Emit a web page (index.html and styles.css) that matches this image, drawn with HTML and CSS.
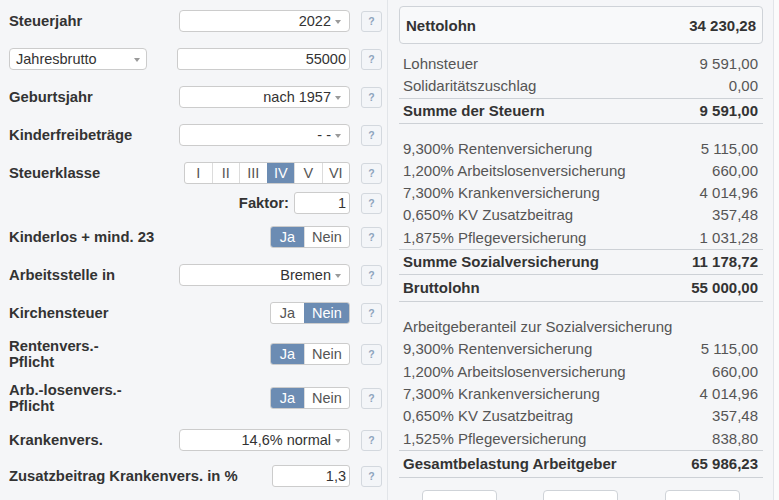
FILE: index.html
```html
<!DOCTYPE html>
<html lang="de">
<head>
    <meta charset="UTF-8">
    <meta name="viewport" content="width=device-width, initial-scale=1.0">
    <title>Brutto Netto Rechner</title>
    <link rel="stylesheet" href="styles.css">
</head>
<body>
    <div class="page">
        <div class="form-col">
            <div class="row">
                <div class="label">Steuerjahr</div>
                <div class="select">2022<span class="caret"></span></div>
                <span class="help">?</span>
            </div>
            <div class="row">
                <div class="label"><div class="select select-left">Jahresbrutto<span class="caret"></span></div></div>
                <div class="input input-wide">55000</div>
                <span class="help">?</span>
            </div>
            <div class="row">
                <div class="label">Geburtsjahr</div>
                <div class="select">nach 1957<span class="caret"></span></div>
                <span class="help">?</span>
            </div>
            <div class="row">
                <div class="label">Kinderfreibeträge</div>
                <div class="select">- -<span class="caret"></span></div>
                <span class="help">?</span>
            </div>
            <div class="row row-close">
                <div class="label">Steuerklasse</div>
                <div class="seg seg-classes">
                    <span>I</span><span>II</span><span>III</span><span class="active">IV</span><span>V</span><span>VI</span>
                </div>
                <span class="help">?</span>
            </div>
            <div class="row row-faktor">
                <div class="label label-right">Faktor:</div>
                <div class="input input-faktor">1</div>
                <span class="help">?</span>
            </div>
            <div class="row">
                <div class="label">Kinderlos + mind. 23</div>
                <div class="seg"><span class="yes active">Ja</span><span class="no">Nein</span></div>
                <span class="help">?</span>
            </div>
            <div class="row">
                <div class="label">Arbeitsstelle in</div>
                <div class="select">Bremen<span class="caret"></span></div>
                <span class="help">?</span>
            </div>
            <div class="row row-before-tall">
                <div class="label">Kirchensteuer</div>
                <div class="seg"><span class="yes">Ja</span><span class="no active">Nein</span></div>
                <span class="help">?</span>
            </div>
            <div class="row row-tall">
                <div class="label">Rentenvers.-<br>Pflicht</div>
                <div class="seg"><span class="yes active">Ja</span><span class="no">Nein</span></div>
                <span class="help">?</span>
            </div>
            <div class="row row-tall row-after-tall">
                <div class="label">Arb.-losenvers.-<br>Pflicht</div>
                <div class="seg"><span class="yes active">Ja</span><span class="no">Nein</span></div>
                <span class="help">?</span>
            </div>
            <div class="row row-kv">
                <div class="label">Krankenvers.</div>
                <div class="select">14,6% normal<span class="caret"></span></div>
                <span class="help">?</span>
            </div>
            <div class="row">
                <div class="label">Zusatzbeitrag Krankenvers. in %</div>
                <div class="input input-small">1,3</div>
                <span class="help">?</span>
            </div>
        </div>

        <div class="result-col">
            <div class="net-box"><span>Nettolohn</span><span>34 230,28</span></div>

            <div class="group group-first">
                <div class="line"><span>Lohnsteuer</span><span>9 591,00</span></div>
                <div class="line"><span>Solidaritätszuschlag</span><span>0,00</span></div>
                <div class="line sum"><span>Summe der Steuern</span><span>9 591,00</span></div>
            </div>

            <div class="group">
                <div class="line"><span>9,300% Rentenversicherung</span><span>5 115,00</span></div>
                <div class="line"><span>1,200% Arbeitslosenversicherung</span><span>660,00</span></div>
                <div class="line"><span>7,300% Krankenversicherung</span><span>4 014,96</span></div>
                <div class="line"><span>0,650% KV Zusatzbeitrag</span><span>357,48</span></div>
                <div class="line"><span>1,875% Pflegeversicherung</span><span>1 031,28</span></div>
                <div class="line sum"><span>Summe Sozialversicherung</span><span>11 178,72</span></div>
                <div class="line sum sum-next"><span>Bruttolohn</span><span>55 000,00</span></div>
            </div>

            <div class="group">
                <div class="line"><span>Arbeitgeberanteil zur Sozialversicherung</span></div>
                <div class="line"><span>9,300% Rentenversicherung</span><span>5 115,00</span></div>
                <div class="line"><span>1,200% Arbeitslosenversicherung</span><span>660,00</span></div>
                <div class="line"><span>7,300% Krankenversicherung</span><span>4 014,96</span></div>
                <div class="line"><span>0,650% KV Zusatzbeitrag</span><span>357,48</span></div>
                <div class="line"><span>1,525% Pflegeversicherung</span><span>838,80</span></div>
                <div class="line sum sum-total"><span>Gesamtbelastung Arbeitgeber</span><span>65 986,23</span></div>
            </div>

            <div class="buttons">
                <button></button>
                <button></button>
                <button></button>
            </div>
        </div>
    </div>
</body>
</html>
```

FILE: styles.css
```css
* {
    margin: 0;
    padding: 0;
    box-sizing: border-box;
    font-family: 'Liberation Sans', Arial, sans-serif;
}

body {
    background-color: #fbfbfb;
    font-size: 14.5px;
    color: #333;
    overflow: hidden;
}

.page {
    display: flex;
    height: 500px;
}

/* left column: inputs */

.form-col {
    width: 388px;
    padding: 10px 5px 0 8px;
    background-color: #f5f6f8;
    border-right: 1px solid #e2e5e9;
}

.row {
    display: flex;
    align-items: center;
    height: 22px;
    margin-bottom: 16px;
}

.row-close {
    margin-bottom: 8px;
}

.row-faktor {
    margin-bottom: 12px;
}

.row-before-tall {
    margin-bottom: 14px;
}

.row-tall {
    height: 32px;
    margin-bottom: 12px;
}

.row-after-tall {
    margin-bottom: 15px;
}

.row-kv {
    margin-bottom: 14px;
}

.label {
    flex: 1;
    padding-left: 1px;
    font-size: 14.8px;
    font-weight: bold;
    color: #333;
    line-height: 16px;
}

.label-right {
    text-align: right;
    padding-right: 5px;
}

.select {
    width: 171px;
    height: 22px;
    display: flex;
    align-items: center;
    justify-content: flex-end;
    gap: 4px;
    padding: 0 8px;
    background: white;
    border: 1px solid #ccc;
    border-radius: 4px;
    font-size: 14.5px;
    font-weight: normal;
    color: #333;
}

.select-left {
    width: 138px;
    justify-content: space-between;
    padding: 0 6px 0 6px;
}

.caret {
    width: 0;
    height: 0;
    margin-top: 1px;
    border-left: 3.5px solid transparent;
    border-right: 3.5px solid transparent;
    border-top: 4px solid #9a9a9a;
}

.input {
    height: 22px;
    line-height: 20px;
    padding-right: 3px;
    text-align: right;
    background: white;
    border: 1px solid #ccc;
    border-radius: 3px;
    color: #333;
}

.input-wide {
    width: 173px;
}

.input-faktor {
    width: 56px;
}

.input-small {
    width: 78px;
}

.help {
    width: 21px;
    height: 21px;
    margin-left: 11px;
    line-height: 19px;
    text-align: center;
    font-size: 10.5px;
    font-weight: bold;
    color: #8ea4bd;
    background: #f3f5f8;
    border: 1px solid #d3d8de;
    border-radius: 3px;
}

.seg {
    display: flex;
    height: 22px;
    background: white;
    border: 1px solid #ccc;
    border-radius: 3px;
    overflow: hidden;
}

.seg span {
    line-height: 20px;
    text-align: center;
    color: #555;
}

.seg span + span {
    border-left: 1px solid #dcdcdc;
}

.seg span.active {
    background-color: #6c8cb3;
    border-left-color: #6c8cb3;
    color: white;
}

.seg-classes {
    width: 166px;
}

.seg-classes span {
    flex: 1;
}

.seg .yes {
    width: 33px;
}

.seg .no {
    width: 45px;
}

/* right column: results */

.result-col {
    width: 386px;
    padding: 6px 10px 0 11px;
    font-size: 15px;
    background-color: #f5f6f8;
    border-right: 1px solid #e2e5e9;
}

.net-box {
    display: flex;
    justify-content: space-between;
    align-items: center;
    height: 38px;
    padding: 0 6px;
    font-weight: bold;
    color: #333;
    background: #f8f9fa;
    border: 1px solid #cfd3d8;
    border-radius: 4px;
}

.group {
    margin-top: 14px;
}

.group-first {
    margin-top: 9px;
}

.line {
    display: flex;
    justify-content: space-between;
    height: 22.3px;
    line-height: 22.3px;
    padding: 0 5px 0 4px;
    color: #555;
    white-space: nowrap;
}

.line.sum {
    height: auto;
    line-height: 24px;
    font-weight: bold;
    color: #333;
    border-top: 1px solid #cdd1d6;
    border-bottom: 1px solid #cdd1d6;
}

.line.sum-next {
    line-height: 26px;
    border-top: none;
}

.line.sum-total {
    line-height: 26px;
}

.buttons {
    display: flex;
    justify-content: space-around;
    margin-top: 12px;
}

button {
    width: 75px;
    height: 30px;
    background: white;
    border: 1px solid #cfd3d8;
    border-radius: 4px;
}
```
